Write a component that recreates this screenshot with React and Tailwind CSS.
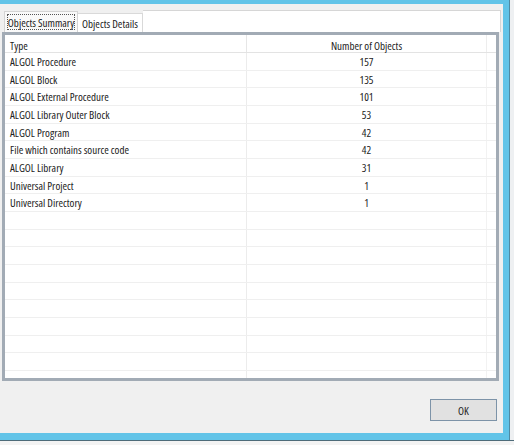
const rows = [
  ['ALGOL Procedure', '157'],
  ['ALGOL Block', '135'],
  ['ALGOL External Procedure', '101'],
  ['ALGOL Library Outer Block', '53'],
  ['ALGOL Program', '42'],
  ['File which contains source code', '42'],
  ['ALGOL Library', '31'],
  ['Universal Project', '1'],
  ['Universal Directory', '1'],
];

const EMPTY_ROWS = 10;

const Row = ({ type, count }) => (
  <div className="flex h-[17.67px] shrink-0 border-b border-[#efefef]">
    <div className="w-[242px] pl-[5px] leading-[18px] border-r border-[#ececec] whitespace-nowrap">{type}</div>
    <div className="w-[240px] text-center leading-[18px] border-r border-[#f2f2f2]">{count}</div>
    <div className="flex-1" />
  </div>
);

export default function App() {
  const font = { fontFamily: '"Open Sans", "DejaVu Sans Condensed", sans-serif' };
  return (
    <div style={font} className="w-[514px] h-[445px] flex flex-col bg-[#eef0f2] text-[11px] font-stretch-condensed text-[#222] overflow-hidden">
      <div className="flex h-[440px] shrink-0">
        <div className="w-[510px] flex flex-col bg-[#62c4e8] pt-[4px] pr-[6px] pb-[7px] border-r border-[#4f8aa3]">
          <div className="flex-1 flex flex-col bg-[#f0f0f0]">
            <div className="h-[6px] shrink-0" />
            {/* tab strip */}
            <div className="flex h-[22px] shrink-0">
              <div className="w-[4px]" />
              <div className="w-[74px] mt-[1px] bg-[#f9f9f9] border border-b-0 border-[#d4d4d4] p-[2px]">
                <div className="h-full border border-dotted border-[#555] flex items-center justify-center leading-none whitespace-nowrap">
                  Objects Summary
                </div>
              </div>
              <div className="w-[65px] mt-[3px] bg-white border-r border-t border-[#d9d9d9] flex items-center justify-center leading-none whitespace-nowrap">
                Objects Details
              </div>
              <div className="flex-1 bg-white border-t border-r border-[#d6d6d6] mr-[2px]" />
            </div>
            {/* list view */}
            <div className="ml-[2px] mr-[4px] h-[349px] shrink-0 border-[3px] border-[#a2abb5] bg-white flex flex-col overflow-hidden">
              <div className="flex h-[18px] shrink-0 border-b border-[#e3e3e3]">
                <div className="w-[242px] pl-[5px] leading-[21px] border-r border-[#e6e6e6]">Type</div>
                <div className="w-[240px] text-center leading-[21px] border-r border-[#ededed]">Number of Objects</div>
                <div className="flex-1" />
              </div>
              {rows.map(([t, c]) => (
                <Row key={t} type={t} count={c} />
              ))}
              {Array.from({ length: EMPTY_ROWS }).map((_, i) => (
                <Row key={i} type="" count="" />
              ))}
            </div>
            {/* footer */}
            <div className="flex-1 flex justify-end pt-[18px] pr-[6px]">
              <button className="w-[67px] h-[22px] bg-[#e1e1e1] border border-[#7d93a8] text-[11px] leading-none text-[#222]">
                OK
              </button>
            </div>
          </div>
        </div>
        <div className="flex-1 bg-[#eef0f2]" />
      </div>
      <div className="flex-1 border-t border-[#4e6b79] bg-[#f3f3f3]" />
    </div>
  );
}
